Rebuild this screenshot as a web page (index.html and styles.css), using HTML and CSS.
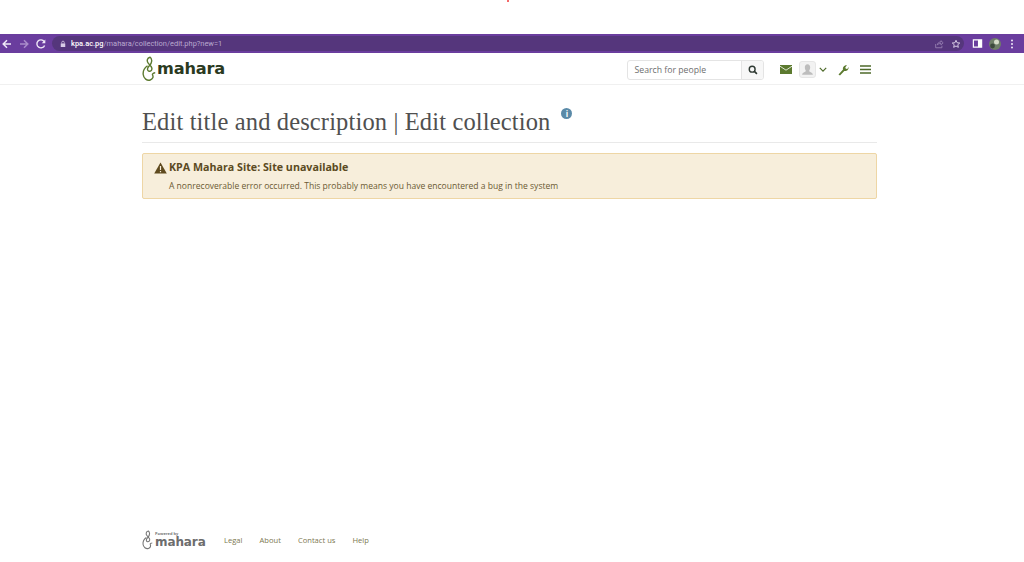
FILE: index.html
```html
<!DOCTYPE html>
<html lang="en">
<head>
<meta charset="utf-8">
<title>Edit collection</title>
<link rel="stylesheet" href="styles.css">
</head>
<body>
<div class="page">
  <div class="top-strip"><span class="red-mark"></span></div>
  <div class="browser-bar">
    <svg class="bicon" viewBox="0 0 12 12"><path d="M10 6H2.500M6 2.200 2.200 6 6 9.800" fill="none" stroke="#efe8f7" stroke-width="1.500"/></svg>
    <svg class="bicon fwd" viewBox="0 0 12 12"><path d="M2 6h7.500M6 2.200 9.800 6 6 9.800" fill="none" stroke="#a98cca" stroke-width="1.500"/></svg>
    <svg class="bicon reload" viewBox="0 0 12 12"><path d="M9.600 7.400A4 4 0 1 1 9.200 3.600" fill="none" stroke="#efe8f7" stroke-width="1.400"/><path d="M10.300 1.600v3.600H6.800z" fill="#efe8f7"/></svg>
    <div class="omnibox">
      <svg class="lock" viewBox="0 0 8 10"><path d="M1 4.200h6V9H1z" fill="#d8cde6"/><path d="M2.300 4.200V2.900a1.700 1.700 0 0 1 3.400 0v1.300" fill="none" stroke="#d8cde6"/></svg>
      <span class="url"><span class="host">kpa.ac.pg</span>/mahara/collection/edit.php?new=1</span>
      <span class="omni-right">
        <svg class="oicon" viewBox="0 0 12 12"><path d="M2 6v4.500h7.500V8M4 7c.4-2.400 2-3.400 4.300-3.400V2L11 4.600 8.300 7V5.400C6.500 5.400 5 5.800 4 7z" fill="none" stroke="#9a84b5"/></svg>
        <svg class="oicon" viewBox="0 0 12 12"><path d="m6 1.500 1.300 3 3.200.3-2.400 2.100.7 3.100L6 8.400l-2.800 1.600.7-3.100L1.500 4.800l3.200-.3z" fill="none" stroke="#e0d6ec" stroke-width="1.100"/></svg>
      </span>
    </div>
    <svg class="bicon side" viewBox="0 0 12 12"><path d="M1.500 2h9v8h-9z" fill="none" stroke="#fff" stroke-width="1.300"/><path d="M6.500 2h4v8h-4z" fill="#fff"/></svg>
    <svg class="avatar" viewBox="0 0 12 12"><circle cx="6" cy="6" r="6" fill="#6f7f68"/><circle cx="7.500" cy="4" r="2.500" fill="#d6dcc8"/><circle cx="3.500" cy="8" r="2.400" fill="#3d4a3c"/></svg>
    <svg class="bicon dots" viewBox="0 0 12 12"><circle cx="6" cy="2.500" r="1" fill="#efe8f7"/><circle cx="6" cy="6" r="1" fill="#efe8f7"/><circle cx="6" cy="9.500" r="1" fill="#efe8f7"/></svg>
  </div>

  <header class="site-header">
    <div class="container header-row">
      <a class="logo">
        <svg class="logo-mark" viewBox="0 0 14 26"><path d="M8 1.200C5 1.800 4.600 5 6.200 7.200 8 9.600 9.300 10 9.800 12c.5 2-1 3.500-2.800 3.200C5.200 14.900 5 12.500 6.500 10.800 8.300 8.700 10 7 9.700 4.500 9.500 2.800 9 1.700 8 1.200zM5.500 9.800C2.500 12 .8 15 1.200 18.500 1.600 22.400 5 25 8.200 24c2.800-.9 3.300-3.200 2.400-5-.6-1.200 1-2.200 2.600-2.200" fill="none" stroke="#5c7a2f" stroke-width="1.400"/></svg>
        <span class="logo-text">mahara</span>
      </a>
      <div class="header-tools">
        <div class="search">
          <span class="search-input">Search for people</span>
          <span class="search-btn">
            <svg class="search-icon" viewBox="0 0 12 12"><circle cx="5" cy="5" r="3.500" fill="none" stroke="#2f3a33" stroke-width="1.700"/><path d="m7.700 7.700 3 3" stroke="#2f3a33" stroke-width="2"/></svg>
          </span>
        </div>
        <nav class="nav-icons">
          <svg class="mail" viewBox="0 0 12 9"><path d="M0 0h12v9H0z" fill="#5c7a2f"/><path d="m0 1.200 6 4 6-4" fill="none" stroke="#fff" stroke-width=".8"/></svg>
          <span class="user-pic"><svg viewBox="0 0 14 14"><path d="M7 2c1.700 0 2.500 1.300 2.500 3S8.800 7.800 8.500 8.500c.3 1 3.500 1.300 3.500 3.500H2c0-2.200 3.200-2.500 3.500-3.500C5.200 7.800 4.500 6.700 4.500 5S5.300 2 7 2z" fill="#bdbdbd"/></svg></span>
          <svg class="chev" viewBox="0 0 10 6"><path d="m1 1 4 4 4-4" fill="none" stroke="#4e6a2a" stroke-width="1.500"/></svg>
          <svg class="wrench" viewBox="0 0 12 12"><path d="M1.500 10.500 6 5.500C5.500 3.500 7 1 10 1.300L8.300 3.200l.5 1.500 1.500.4L11.500 3c.5 2.700-2 4.500-4.200 4L3 11.500z" fill="#5c7a2f"/></svg>
          <svg class="burger" viewBox="0 0 11 9"><path d="M0 1h11M0 4.500h11M0 8h11" stroke="#4e6a2a" stroke-width="1.600"/></svg>
        </nav>
      </div>
    </div>
  </header>

  <main class="container main">
    <div class="title-row">
      <h1 class="title">Edit title and description | Edit collection</h1>
      <span class="info">i</span>
    </div>
    <div class="alert">
      <h2 class="alert-title">
        <svg class="warn" viewBox="0 0 13 12"><path d="M6.500.5 12.800 11.500H.2z" fill="#5f4a1e"/><path d="M6.500 4v4M6.500 9v1.300" stroke="#f7eedb" stroke-width="1.200"/></svg>
        KPA Mahara Site: Site unavailable
      </h2>
      <p class="alert-body">A nonrecoverable error occurred. This probably means you have encountered a bug in the system</p>
    </div>
  </main>

  <footer class="container footer">
    <a class="foot-logo">
      <svg class="foot-mark" viewBox="0 0 14 26"><path d="M8 1.200C5 1.800 4.600 5 6.200 7.200 8 9.600 9.300 10 9.800 12c.5 2-1 3.500-2.800 3.200C5.200 14.900 5 12.500 6.500 10.800 8.300 8.700 10 7 9.700 4.500 9.500 2.800 9 1.700 8 1.200zM5.500 9.800C2.500 12 .8 15 1.200 18.500 1.600 22.400 5 25 8.200 24c2.800-.9 3.300-3.200 2.400-5-.6-1.200 1-2.200 2.600-2.200" fill="none" stroke="#777" stroke-width="1.400"/></svg>
      <span class="foot-stack"><span class="powered">Powered by</span><span class="foot-text">mahara</span></span>
    </a>
    <a class="foot-link">Legal</a>
    <a class="foot-link">About</a>
    <a class="foot-link">Contact us</a>
    <a class="foot-link">Help</a>
  </footer>
</div>
</body>
</html>
```

FILE: styles.css
```css
* { box-sizing: border-box; }
html, body { margin: 0; padding: 0; height: 100%; background: #fff; overflow: hidden; }
body { font-family: "Open Sans", "Liberation Sans", sans-serif; color: #333; }
.page { height: 562px; display: flex; flex-direction: column; }
.top-strip { height: 34px; flex: none; display: flex; justify-content: center; padding-right: 8px; }
.red-mark { width: 2px; height: 2px; background: #f46a6a; }

.browser-bar { height: 19px; flex: none; background: #6a3d9e; display: flex; align-items: center; padding-left: 1px; }
.bicon { width: 12px; height: 12px; flex: none; }
.fwd { margin-left: 5px; }
.reload { margin-left: 5px; }
.omnibox { margin-left: 5px; width: 912px; height: 15px; background: #55367c; border-radius: 8px; display: flex; align-items: center; padding: 0 3px 0 8px; flex: none; }
.lock { width: 6px; height: 8px; margin-right: 5px; flex: none; }
.url { font-family: "Roboto", "Liberation Sans", sans-serif; font-size: 7.450px; color: #b9a8cf; white-space: nowrap; }
.host { color: #fff; font-weight: 500; }
.omni-right { margin-left: auto; display: flex; gap: 7px; }
.oicon { width: 10px; height: 10px; }
.side { margin-left: 8px; width: 11px; height: 11px; }
.avatar { width: 12px; height: 12px; margin-left: 6px; flex: none; }
.dots { margin-left: 5px; }

.site-header { height: 32px; flex: none; border-bottom: 1px solid #f0f0f0; }
.container { width: 735px; margin-left: 142px; flex: none; }
.header-row { height: 31px; display: flex; align-items: center; justify-content: space-between; }
.logo { display: flex; align-items: center; }
.logo-mark { width: 14px; height: 26px; }
.logo-text { font-family: "DejaVu Sans", sans-serif; font-weight: 700; font-size: 16.200px; color: #2b3a1f; letter-spacing: -0.2px; line-height: 20px; margin-top: 1px; margin-left: 1px; }
.header-tools { display: flex; align-items: center; margin-right: 6px; margin-top: 2px; }
.search { display: flex; width: 137px; height: 20px; border: 1px solid #e4e4e4; border-radius: 3px; overflow: hidden; }
.search-input { flex: 1; font-size: 8.700px; color: #6e6e6e; padding-left: 6.500px; line-height: 18px; white-space: nowrap; }
.search-btn { width: 22px; background: #f7f7f7; border-left: 1px solid #e4e4e4; display: flex; align-items: center; justify-content: center; }
.search-icon { width: 10px; height: 10px; }
.nav-icons { display: flex; align-items: center; margin-left: 16px; }
.mail { width: 12px; height: 9px; }
.user-pic { width: 17px; height: 17px; margin-left: 7px; border: 1px solid #e6e6e6; border-radius: 3px; background: #f2f2f2; display: flex; }
.user-pic svg { width: 15px; height: 15px; }
.chev { width: 8px; height: 5px; margin-left: 3px; }
.wrench { width: 12px; height: 12px; margin-left: 10px; }
.burger { width: 11px; height: 9px; margin-left: 11px; }

.main { flex: 1; }
.title-row { display: flex; align-items: flex-start; height: 58px; padding-top: 23px; border-bottom: 1px solid #e9e9e9; }
.title { margin: 0; font-family: "Liberation Serif", "DejaVu Serif", serif; font-weight: 400; font-size: 24.500px; letter-spacing: 0.14px; line-height: 28px; color: #505050; white-space: nowrap; }
.info { margin-left: 11px; width: 11px; height: 11px; border-radius: 50%; background: #5a8aa8; color: #fff; font-size: 8px; font-weight: 700; line-height: 11px; text-align: center; }
.alert { margin-top: 10px; height: 46px; background: #f7eedb; border: 1px solid #eed6a5; border-radius: 2px; padding: 6px 11px 5px; }
.alert-title { margin: 0; display: flex; align-items: center; gap: 2px; font-size: 10.700px; font-weight: 700; line-height: 15px; color: #5b4a22; }
.warn { width: 13px; height: 12px; }
.alert-body { margin: 5px 0 0 15px; font-size: 8.550px; line-height: 12px; color: #6b5a33; }

.footer { height: 30px; margin-bottom: 7px; display: flex; align-items: center; }
.foot-logo { display: flex; align-items: center; width: 82px; gap: 2px; }
.foot-mark { width: 11px; height: 20px; }
.foot-stack { display: flex; flex-direction: column; line-height: 1; }
.powered { font-size: 4px; font-weight: 700; color: #777; }
.foot-text { font-family: "DejaVu Sans", sans-serif; font-weight: 700; font-size: 12px; line-height: 12px; color: #6d6d6d; letter-spacing: -0.1px; }
.foot-link { font-size: 7.600px; color: #7d7850; margin-right: 17px; }
```
